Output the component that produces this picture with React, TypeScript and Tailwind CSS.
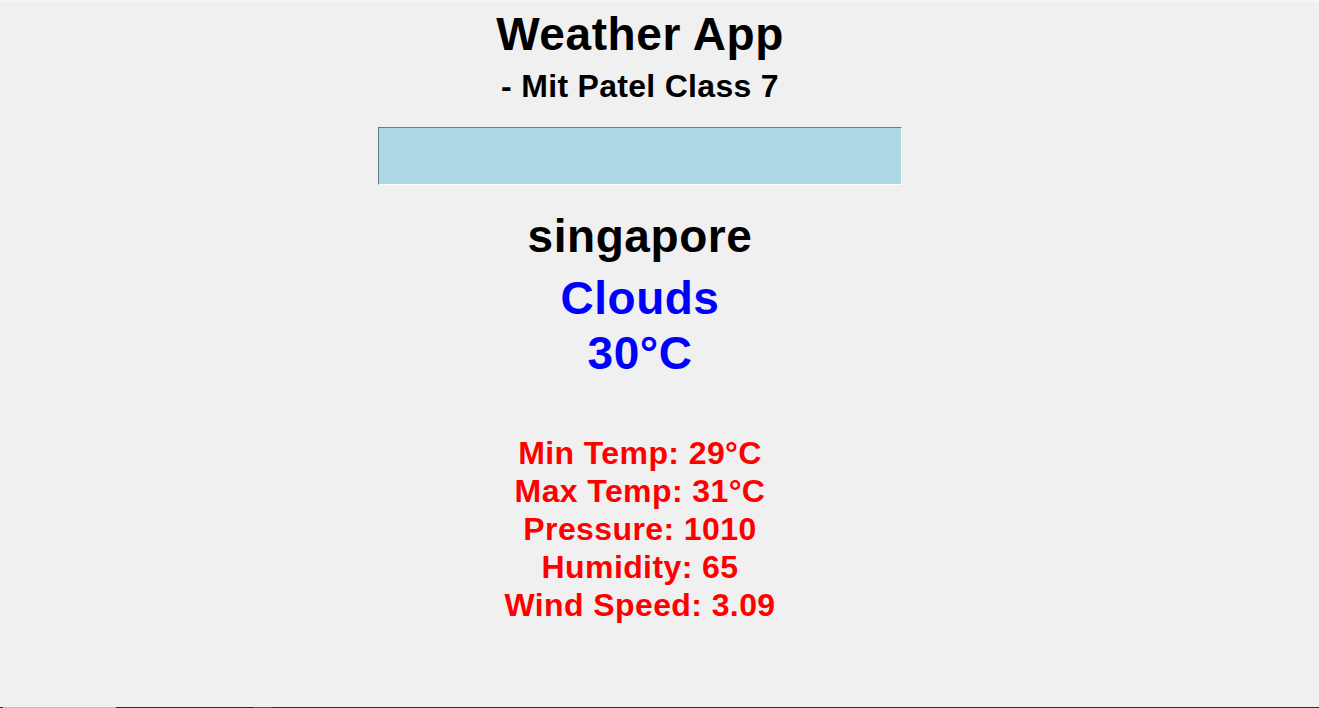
export default function App(){
  return(
    <div className="h-[708px] w-full flex flex-col bg-[#f0f0f0] font-['Liberation_Sans',Arial,sans-serif] font-bold overflow-hidden">
      <div className="h-[2px] bg-[#f6f6f6]"/>
      <div className="flex-1 flex flex-col items-center pr-[39px]">
        <h1 className="mt-[6px] text-[46px] leading-[52px] tracking-[0.6px] text-black">Weather App</h1>
        <h2 className="mt-[8px] text-[32px] leading-[36px] tracking-[0.3px] text-black">- Mit Patel Class 7</h2>
        <input type="text" className="mt-[23px] w-[524px] h-[58px] bg-[#add8e6] border border-t-[#66808a] border-l-[#66808a] border-b-white border-r-white outline-none px-1 text-[32px] font-bold" />
        <div className="mt-[25px] text-[46px] leading-[52px] tracking-[0.55px] text-black">singapore</div>
        <div className="mt-[9px] text-[46px] leading-[55px] tracking-[0.5px] text-[#0000ff] text-center">
          <div>Clouds</div>
          <div>30°C</div>
        </div>
        <div className="mt-[53px] text-[32px] leading-[38px] tracking-[0.4px] text-[#ff0000] text-center">
          {['Min Temp: 29°C','Max Temp: 31°C','Pressure: 1010','Humidity: 65','Wind Speed: 3.09'].map(t=>(
            <div key={t}>{t}</div>
          ))}
        </div>
      </div>
      <div className="h-px flex">
        <div className="w-[3px] bg-[#333]"/>
        <div className="w-[113px] bg-[#bdbdbd]"/>
        <div className="w-[137px] bg-[#2b2b2b]"/>
        <div className="w-[19px] bg-[#555]"/>
        <div className="flex-1 bg-[#2b2b2b]"/>
      </div>
    </div>
  )
}
